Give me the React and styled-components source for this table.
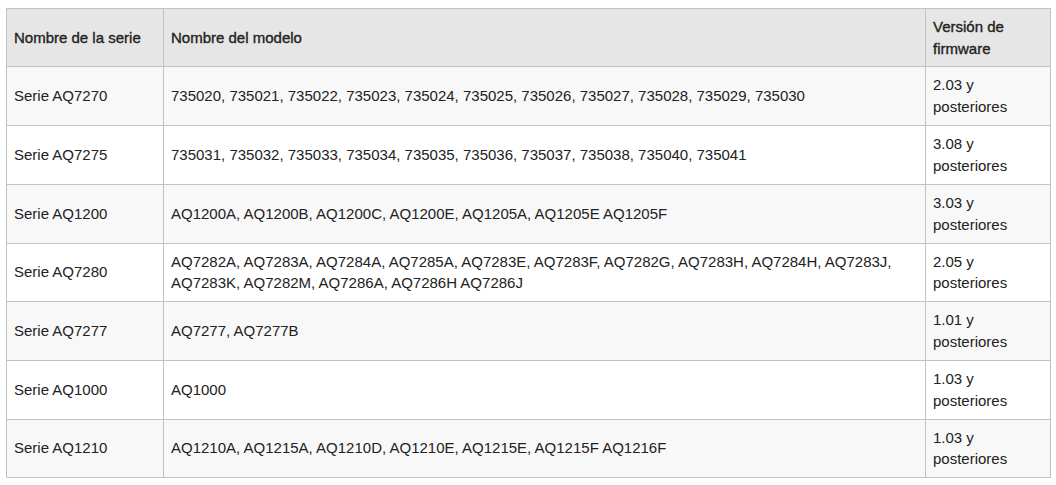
import styled, { createGlobalStyle } from "styled-components";

const GlobalStyle = createGlobalStyle`
  html, body {
    margin: 0;
    padding: 0;
    background: #ffffff;
  }
  body {
    font-family: "Liberation Sans", Arial, Helvetica, sans-serif;
    color: #222222;
  }
`;

const rows = [
  ["Serie AQ7270", "735020, 735021, 735022, 735023, 735024, 735025, 735026, 735027, 735028, 735029, 735030", "2.03 y posteriores"],
  ["Serie AQ7275", "735031, 735032, 735033, 735034, 735035, 735036, 735037, 735038, 735040, 735041", "3.08 y posteriores"],
  ["Serie AQ1200", "AQ1200A, AQ1200B, AQ1200C, AQ1200E, AQ1205A, AQ1205E AQ1205F", "3.03 y posteriores"],
  ["Serie AQ7280", "AQ7282A, AQ7283A, AQ7284A, AQ7285A, AQ7283E, AQ7283F, AQ7282G, AQ7283H, AQ7284H, AQ7283J, AQ7283K, AQ7282M, AQ7286A, AQ7286H AQ7286J", "2.05 y posteriores"],
  ["Serie AQ7277", "AQ7277, AQ7277B", "1.01 y posteriores"],
  ["Serie AQ1000", "AQ1000", "1.03 y posteriores"],
  ["Serie AQ1210", "AQ1210A, AQ1215A, AQ1210D, AQ1210E, AQ1215E, AQ1215F AQ1216F", "1.03 y posteriores"],
];

export default function App() {
  return (
    <Page>
      <GlobalStyle />
      <Table>
        <colgroup>
          <col style={{ width: 157 }} />
          <col style={{ width: 762 }} />
          <col style={{ width: 125 }} />
        </colgroup>
        <thead>
          <tr>
            <Th>Nombre de la serie</Th>
            <Th>Nombre del modelo</Th>
            <Th>Versión de firmware</Th>
          </tr>
        </thead>
        <tbody>
          {rows.map((r, i) => (
            <Row key={r[0]} $odd={i % 2 === 0}>
              <Td>{r[0]}</Td>
              <Td>{r[1]}</Td>
              <Td>{r[2]}</Td>
            </Row>
          ))}
        </tbody>
      </Table>
    </Page>
  );
}

const Page = styled.div`
  padding: 8px 6px;
`;

const Table = styled.table`
  width: 1045px;
  table-layout: fixed;
  border-collapse: collapse;
  font-size: 15px;
  line-height: 21.7px;
`;

const Th = styled.th`
  background: #e6e6e6;
  border: 1px solid #c2c2c2;
  padding: 7px 7px;
  text-align: left;
  vertical-align: middle;
  font-weight: 400;
  -webkit-text-stroke: 0.35px #222222;
`;

const Row = styled.tr`
  background: ${(p) => (p.$odd ? "#f8f8f8" : "#ffffff")};
`;

const Td = styled.td`
  border: 1px solid #c2c2c2;
  padding: 7px 7px 7.3px;
  vertical-align: middle;
`;
